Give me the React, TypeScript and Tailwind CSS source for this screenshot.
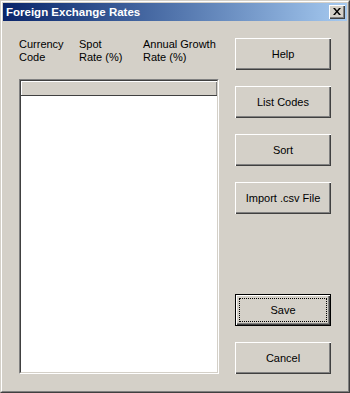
import React from "react";

function Btn({ label, isDefault = false }: { label: string; isDefault?: boolean }) {
  if (isDefault) {
    return (
      <div className="w-[96px] h-[32px] border border-black bg-[#d4d0c8]">
        <div className="w-full h-full p-[3px] shadow-[inset_1px_1px_0_#ffffff,inset_-1px_-1px_0_#404040,inset_-2px_-2px_0_#808080]">
          <div className="w-full h-full border border-dotted border-black flex items-center justify-center text-[11px] leading-[13px] text-black">
            {label}
          </div>
        </div>
      </div>
    );
  }
  return (
    <div className="w-[96px] h-[32px] bg-[#d4d0c8] flex items-center justify-center text-[11px] leading-[13px] text-black shadow-[inset_1px_1px_0_#ffffff,inset_-1px_-1px_0_#404040,inset_-2px_-2px_0_#808080]">
      {label}
    </div>
  );
}

export default function App() {
  return (
    <div className="w-[350px] h-[393px] bg-[#d4d0c8] border border-t-[#d4d0c8] border-l-[#d4d0c8] border-r-[#404040] border-b-[#404040] font-['Liberation_Sans',Arial,sans-serif]">
      <div className="w-full h-full border border-t-white border-l-white border-r-[#808080] border-b-[#808080] p-px flex flex-col">
        {/* Title bar */}
        <div className="h-[18px] flex items-center justify-between pl-[3px] pr-[2px] bg-gradient-to-r from-[#0a246a] to-[#a6caf0]">
          <span className="text-white font-bold text-[11.5px] leading-[14px]">Foreign Exchange Rates</span>
          <div className="w-[16px] h-[14px] bg-[#d4d0c8] flex items-center justify-center shadow-[inset_1px_1px_0_#ffffff,inset_-1px_-1px_0_#404040,inset_-2px_-2px_0_#808080]">
            <svg width="8" height="7" viewBox="0 0 8 7" className="mb-px">
              <path d="M0 0h2l2 2.5L6 0h2L5 3.5 8 7H6L4 4.5 2 7H0l3-3.5z" fill="#000" />
            </svg>
          </div>
        </div>

        {/* Content */}
        <div className="flex pl-[16px] pt-[17px] gap-[16px]">
          {/* Left column */}
          <div className="w-[200px] flex flex-col">
            <div className="flex text-[11px] leading-[13px] text-black h-[26px]">
              <div className="w-[60px]">
                <div>Currency</div>
                <div>Code</div>
              </div>
              <div className="w-[64px]">
                <div>Spot</div>
                <div>Rate (%)</div>
              </div>
              <div>
                <div>Annual Growth</div>
                <div>Rate (%)</div>
              </div>
            </div>
            <div className="mt-[15px] h-[295px] border border-t-[#808080] border-l-[#808080] border-r-white border-b-white">
              <div className="w-full h-full border border-t-[#404040] border-l-[#404040] border-r-[#d4d0c8] border-b-[#d4d0c8] bg-white flex flex-col">
                <div className="h-[15px] bg-[#d4d0c8] border-b border-[#404040] shadow-[inset_1px_1px_0_#ffffff,inset_-1px_0_0_#808080]" />
                <div className="flex-1 bg-white" />
              </div>
            </div>
          </div>

          {/* Right column */}
          <div className="flex flex-col">
            <div className="flex flex-col gap-[16px]">
              <Btn label="Help" />
              <Btn label="List Codes" />
              <Btn label="Sort" />
              <Btn label="Import .csv File" />
            </div>
            <div className="flex flex-col gap-[16px] mt-[80px]">
              <Btn label="Save" isDefault />
              <Btn label="Cancel" />
            </div>
          </div>
        </div>
      </div>
    </div>
  );
}
